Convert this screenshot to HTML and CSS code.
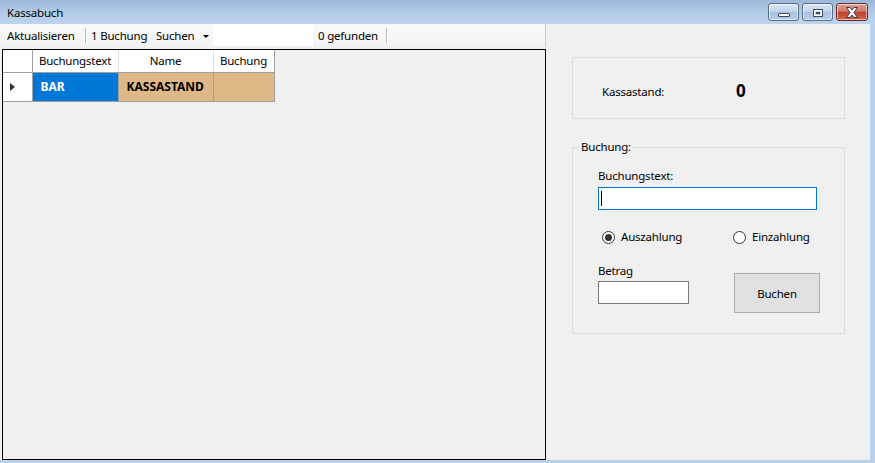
FILE: index.html
```html
<!DOCTYPE html>
<html lang="de">
<head>
<meta charset="utf-8">
<title>Kassabuch</title>
<link rel="stylesheet" href="styles.css">
</head>
<body>
<div class="window">
  <div class="titlebar">
    <span class="title">Kassabuch</span>
    <div class="caption-buttons">
      <div class="cbtn cmin"><span class="min-glyph"></span></div>
      <div class="cbtn cmax"><span class="max-glyph"></span></div>
      <div class="cbtn cclose">
        <svg width="14" height="11" viewBox="0 0 14 11"><path d="M1.5 0.5 H5 L7 3 L9 0.5 H12.5 L9 5.5 L12.5 10.5 H9 L7 8 L5 10.5 H1.5 L5 5.5 Z" fill="#fff" stroke="#3c3c3c" stroke-width="1" stroke-linejoin="round"/></svg>
      </div>
    </div>
  </div>
  <div class="client">
    <div class="leftcol">
      <div class="toolbar">
        <span class="tb-item tb-akt">Aktualisieren</span>
        <span class="tb-sep"></span>
        <span class="tb-item tb-count">1 Buchung</span>
        <span class="tb-item tb-drop">Suchen<span class="drop-arrow"></span></span>
        <span class="tb-text"></span>
        <span class="tb-item tb-found">0 gefunden</span>
        <span class="tb-sep"></span>
      </div>
      <div class="grid">
        <table class="dgv">
          <thead>
            <tr>
              <th class="rowhead"></th>
              <th class="c1">Buchungstext</th>
              <th class="c2">Name</th>
              <th class="c3">Buchung</th>
            </tr>
          </thead>
          <tbody>
            <tr>
              <td class="rowhead"><span class="row-arrow"></span></td>
              <td class="cell sel">BAR</td>
              <td class="cell tan">KASSASTAND</td>
              <td class="cell tan"></td>
            </tr>
          </tbody>
        </table>
      </div>
    </div>
    <div class="rightcol">
      <div class="group group-stand">
        <span class="stand-label">Kassastand:</span>
        <span class="stand-value">0</span>
      </div>
      <div class="group group-buchung">
        <span class="legend">Buchung:</span>
        <label class="lbl lbl-text">Buchungstext:</label>
        <div class="textbox textbox-focus"><span class="caret"></span></div>
        <div class="radios">
          <label class="radio radio-aus"><span class="rcircle checked"></span>Auszahlung</label>
          <label class="radio radio-ein"><span class="rcircle"></span>Einzahlung</label>
        </div>
        <div class="bottom-row">
          <div class="betrag">
            <label class="lbl lbl-betrag">Betrag</label>
            <div class="textbox textbox-small"></div>
          </div>
          <div class="button">Buchen</div>
        </div>
      </div>
    </div>
  </div>
</div>
</body>
</html>
```
FILE: styles.css
```css
html, body {
  margin: 0;
  padding: 0;
}
body {
  width: 875px;
  height: 463px;
  overflow: hidden;
  background: #b9d1ea;
  font-family: "Noto Sans", "Open Sans", sans-serif;
  font-size: 11.5px;
  letter-spacing: -0.2px;
  color: #000;
}
.window {
  width: 875px;
  height: 463px;
  display: flex;
  flex-direction: column;
}
.titlebar {
  height: 24px;
  flex: 0 0 24px;
  background: linear-gradient(#9cb8d8, #b5cde9 60%, #bcd4ee);
  display: flex;
  align-items: flex-start;
  justify-content: space-between;
}
.title {
  padding-left: 7px;
  line-height: 26px;
}
.caption-buttons {
  display: flex;
  gap: 3px;
  margin-top: 3px;
  margin-right: 7px;
}
.cbtn {
  width: 31px;
  height: 18px;
  box-sizing: border-box;
  border: 1px solid #5a6f8c;
  border-radius: 3px;
  display: flex;
  align-items: center;
  justify-content: center;
  box-shadow: inset 0 0 0 1px rgba(255,255,255,0.55);
}
.cmin, .cmax {
  background: linear-gradient(#dbe7f5, #c3d6ec 45%, #a9c3e1 50%, #b7cee8);
}
.cclose {
  width: 32px;
  border-color: #6b2a24;
  background: linear-gradient(#e0a197, #d1786a 45%, #c2402f 50%, #d35f4d);
}
.min-glyph {
  width: 12px;
  height: 4px;
  box-sizing: border-box;
  margin-top: 5px;
  background: #fff;
  border: 1px solid #3c4a5c;
  border-radius: 1px;
}
.max-glyph {
  width: 10px;
  height: 8px;
  box-sizing: border-box;
  border: 1px solid #3c4a5c;
  background: #3c4a5c;
  box-shadow: inset 0 0 0 1px #fff, inset 0 0 0 2px #cfdcec;
  margin-top: 1px;
}
.client {
  height: 436px;
  width: 870px;
  background: #f0f0f0;
  display: flex;
}
.leftcol {
  width: 546px;
  display: flex;
  flex-direction: column;
}
.toolbar {
  height: 23px;
  flex: 0 0 23px;
  background: linear-gradient(#fafafa, #f3f3f3);
  border-right: 1px solid #c8c8c8;
  box-sizing: border-box;
  display: flex;
  align-items: center;
}
.tb-item {
  white-space: nowrap;
  line-height: 16px;
  box-sizing: border-box;
}
.tb-akt {
  width: 82px;
  padding-left: 7px;
}
.tb-sep {
  width: 1px;
  height: 15px;
  background: #bdbdbd;
  box-shadow: 1px 0 0 #fff;
  margin-left: 3px;
  margin-right: 5px;
}
.tb-count {
  width: 62px;
}
.tb-drop {
  width: 60px;
  padding-left: 3px;
  display: flex;
  align-items: center;
}
.drop-arrow {
  margin-left: auto;
  margin-right: 4px;
  width: 0;
  height: 0;
  border-left: 3px solid transparent;
  border-right: 3px solid transparent;
  border-top: 3px solid #000;
  margin-top: 1px;
}
.tb-text {
  width: 100px;
  height: 22px;
  background: #fff;
  align-self: flex-start;
}
.tb-found {
  width: 70px;
  padding-left: 5px;
}
.grid {
  flex: 1;
  margin: 2px 0 0 2px;
  border: 1px solid #000;
  background: #f0f0f0;
}
.dgv {
  border-collapse: collapse;
  table-layout: fixed;
}
.dgv th {
  height: 22px;
  padding: 0;
  box-sizing: border-box;
  background: #fff;
  font-weight: normal;
  text-align: center;
  border-right: 1px solid #e1e1e1;
  border-bottom: 1px solid #a0a0a0;
  line-height: 16px;
  vertical-align: middle;
}
.dgv th.rowhead {
  width: 29px;
  border-right: 1px solid #a0a0a0;
}
.dgv th.c1 { width: 86px; }
.dgv th.c2 { width: 95px; }
.dgv th.c3 { width: 61px; border-right: 1px solid #a0a0a0; }
.dgv td {
  height: 29px;
  padding: 0;
  box-sizing: border-box;
  border-right: 1px solid #a0a0a0;
  border-bottom: 1px solid #a0a0a0;
  vertical-align: middle;
}
.dgv td.rowhead {
  background: #fff;
}
.row-arrow {
  display: block;
  width: 0;
  height: 0;
  margin-left: 7px;
  border-top: 4px solid transparent;
  border-bottom: 4px solid transparent;
  border-left: 5px solid #333;
}
.cell {
  font-weight: bold;
  font-size: 12px;
  letter-spacing: 0;
  padding-left: 8px !important;
  white-space: nowrap;
}
.sel {
  background: #0078d7;
  color: #fff;
}
.tan {
  background: #deb887;
}
.rightcol {
  flex: 1;
  padding: 33px 0 0 26px;
  box-sizing: border-box;
}
.group {
  border: 1px solid #dcdcdc;
  box-sizing: border-box;
  width: 273px;
}
.group-stand {
  height: 62px;
  display: flex;
  align-items: center;
  padding-left: 29px;
  padding-top: 6px;
}
.stand-label {
  width: 134px;
}
.stand-value {
  font-weight: bold;
  font-size: 17px;
  letter-spacing: 0;
  line-height: 20px;
}
.group-buchung {
  position: relative;
  margin-top: 28px;
  height: 187px;
  padding: 20px 0 0 25px;
  display: flex;
  flex-direction: column;
  align-items: flex-start;
}
.legend {
  position: absolute;
  left: 6px;
  top: -9px;
  padding: 0 2px;
  line-height: 16px;
  background: #f0f0f0;
}
.lbl {
  display: block;
  line-height: 16px;
}
.textbox {
  box-sizing: border-box;
  height: 23px;
  background: #fff;
  border: 1px solid #7a7a7a;
}
.textbox-focus {
  width: 219px;
  margin-top: 3px;
  border-color: #0078d7;
  display: flex;
  align-items: center;
  padding-left: 2px;
}
.caret {
  width: 1px;
  height: 15px;
  background: #000;
}
.radios {
  display: flex;
  margin-top: 19px;
  height: 16px;
  align-items: center;
  padding-left: 4px;
}
.radio {
  display: flex;
  align-items: center;
  line-height: 16px;
}
.radio-aus {
  width: 131px;
}
.rcircle {
  width: 13px;
  height: 13px;
  box-sizing: border-box;
  border: 1px solid #333;
  border-radius: 50%;
  background: #fff;
  margin-right: 6px;
  display: flex;
  align-items: center;
  justify-content: center;
}
.rcircle.checked::after {
  content: "";
  width: 7px;
  height: 7px;
  border-radius: 50%;
  background: #333;
}
.bottom-row {
  display: flex;
  margin-top: 18px;
}
.betrag {
  width: 92px;
  display: flex;
  flex-direction: column;
}
.lbl-betrag {
  margin-bottom: 2px;
}
.textbox-small {
  width: 91px;
}
.button {
  margin-left: 44px;
  margin-top: 10px;
  width: 86px;
  height: 40px;
  box-sizing: border-box;
  background: #e1e1e1;
  border: 1px solid #adadad;
  display: flex;
  align-items: center;
  justify-content: center;
}
```
